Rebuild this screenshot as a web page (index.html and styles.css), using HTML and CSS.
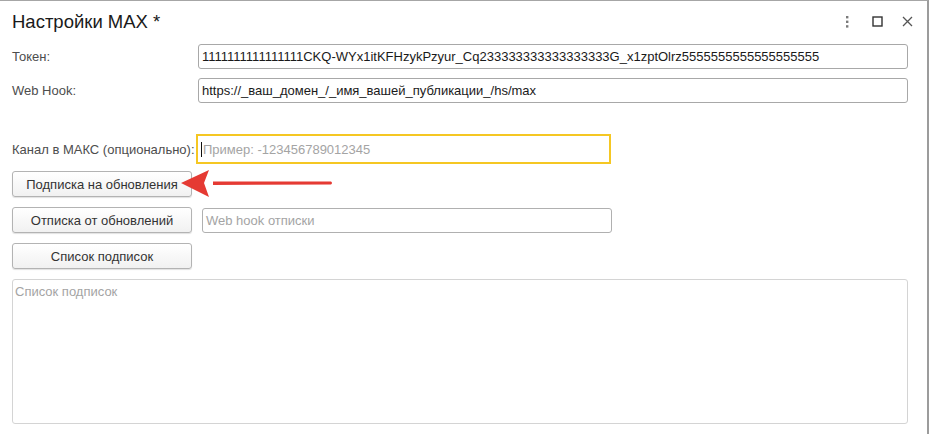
FILE: index.html
```html
<!DOCTYPE html>
<html lang="ru">
<head>
    <meta charset="UTF-8">
    <title>Настройки MAX</title>
    <link rel="stylesheet" href="styles.css">
</head>
<body>
    <div class="window">
        <div class="window-header">
            <h1 class="window-title">Настройки MAX *</h1>
            <div class="window-controls">
                <span class="ctl ctl-more">
                    <svg width="4" height="12" viewBox="0 0 4 12"><rect x="1" y="0" width="2.4" height="2.4" fill="#7a7a7a"/><rect x="1" y="4.6" width="2.4" height="2.4" fill="#7a7a7a"/><rect x="1" y="9.2" width="2.4" height="2.4" fill="#7a7a7a"/></svg>
                </span>
                <span class="ctl ctl-max">
                    <svg width="11" height="11" viewBox="0 0 11 11"><rect x="1" y="1" width="9" height="9" fill="none" stroke="#333" stroke-width="1.4"/></svg>
                </span>
                <span class="ctl ctl-close">
                    <svg width="11" height="11" viewBox="0 0 11 11"><path d="M1 1 L10 10 M10 1 L1 10" stroke="#555" stroke-width="1.3" fill="none"/></svg>
                </span>
            </div>
        </div>

        <div class="form">
            <div class="field-row">
                <label class="field-label">Токен:</label>
                <div class="input">1111111111111111CKQ-WYx1itKFHzykPzyur_Cq233333333333333333G_x1zptOlrz5555555555555555555</div>
            </div>
            <div class="field-row">
                <label class="field-label">Web Hook:</label>
                <div class="input">https://_ваш_домен_/_имя_вашей_публикации_/hs/max</div>
            </div>

            <div class="field-row channel-row">
                <label class="field-label">Канал в МАКС (опционально):</label>
                <div class="input input-focused"><span class="caret"></span><span class="placeholder">Пример: -123456789012345</span></div>
            </div>

            <div class="button-row">
                <button class="btn">Подписка на обновления</button>
                <svg class="pointer-arrow" width="160" height="34" viewBox="0 0 160 34">
                    <path d="M34 14.6 L152 14.4 Q154 16 152 17.6 L34 18 Z" fill="#e53a33"/>
                    <path d="M2 16 L30 3 L25 16 L30 30 Z" fill="#e53a33"/>
                </svg>
            </div>
            <div class="button-row">
                <button class="btn">Отписка от обновлений</button>
                <div class="input input-unsub"><span class="placeholder">Web hook отписки</span></div>
            </div>
            <div class="button-row">
                <button class="btn">Список подписок</button>
            </div>

            <div class="list-box"><span class="placeholder">Список подписок</span></div>
        </div>
    </div>
</body>
</html>
```

FILE: styles.css
```css
* {
    margin: 0;
    padding: 0;
    box-sizing: border-box;
}

body {
    font-family: "Liberation Sans", Arial, sans-serif;
    background: #ffffff;
    color: #333333;
    font-size: 13px;
}

.window {
    width: 929px;
    height: 434px;
    border-top: 1px solid #a6a6a6;
    border-right: 2px solid #9c9c9c;
    background: #ffffff;
}

.window-header {
    display: flex;
    align-items: center;
    justify-content: space-between;
    height: 37px;
    padding: 0 14px 0 12px;
}

.window-title {
    font-size: 18.5px;
    font-weight: normal;
    color: #1a1a1a;
    padding-top: 4px;
}

.window-controls {
    display: flex;
    align-items: center;
    padding-top: 4px;
}

.ctl {
    display: flex;
    align-items: center;
    justify-content: center;
}

.ctl-more {
    margin-right: 23px;
}

.ctl-max {
    margin-right: 19px;
}

.form {
    padding: 6px 19px 0 12px;
}

.field-row {
    display: flex;
    align-items: center;
    margin-bottom: 9px;
}

.field-label {
    width: 186px;
    color: #4d4d4d;
    flex-shrink: 0;
}

.input {
    flex: 1;
    height: 25px;
    border: 1px solid #a8a8a8;
    border-radius: 3px;
    padding: 0 3px;
    display: flex;
    align-items: center;
    color: #1a1a1a;
    white-space: nowrap;
    overflow: hidden;
}

.channel-row {
    margin-top: 31px;
    margin-bottom: 7px;
}

.channel-row .field-label {
    width: 184px;
}

.input-focused {
    flex: 0 0 415px;
    height: 30px;
    border: 2px solid #f5c723;
    border-radius: 0;
    padding: 0 3px;
}

.caret {
    display: inline-block;
    width: 1px;
    height: 15px;
    background: #111;
    margin-right: 1px;
}

.placeholder {
    color: #a4a4a4;
}

.button-row {
    position: relative;
    display: flex;
    align-items: center;
    margin-bottom: 10px;
}

.btn {
    width: 180px;
    height: 26px;
    border: 1px solid #b3b3b3;
    border-radius: 3px;
    background: linear-gradient(#ffffff, #f1f1f1);
    box-shadow: 0 1px 1px rgba(0, 0, 0, 0.12);
    font-family: "Liberation Sans", Arial, sans-serif;
    font-size: 13px;
    color: #333333;
    cursor: pointer;
}

.input-unsub {
    flex: 0 0 410px;
    height: 25px;
    margin-left: 10px;
    border-color: #b0b0b0;
}

/* red pointer drawn over the layout */
.pointer-arrow {
    position: absolute;
    left: 167px;
    top: -4px;
}

.list-box {
    height: 145px;
    border: 1px solid #d4d4d4;
    border-radius: 3px;
    padding: 4px 2px;
}
```
